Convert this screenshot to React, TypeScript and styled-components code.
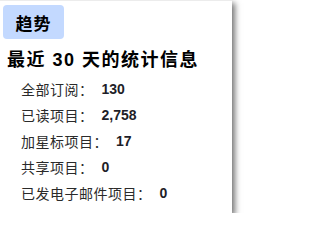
import React from 'react';
import styled, { createGlobalStyle } from 'styled-components';

const GlobalStyle = createGlobalStyle`
  html, body {
    margin: 0;
    padding: 0;
    background: #ffffff;
  }
  body {
    font-family: "Liberation Sans", "Noto Sans CJK SC", Arial, sans-serif;
  }
`;

interface StatItem {
  label: string;
  value: string;
}

const stats: StatItem[] = [
  { label: '全部订阅：', value: '130' },
  { label: '已读项目：', value: '2,758' },
  { label: '加星标项目：', value: '17' },
  { label: '共享项目：', value: '0' },
  { label: '已发电子邮件项目：', value: '0' }
];

const Card = styled.div`
  width: 232px;
  height: 213px;
  box-sizing: border-box;
  background: #ffffff;
  border-top: 1px solid #ececec;
  box-shadow: 3px 3px 6px rgba(0, 0, 0, 0.55);
  display: flex;
  flex-direction: column;
  align-items: flex-start;
`;

const Tab = styled.div`
  margin: 4px 0 0 3px;
  width: 61px;
  height: 34px;
  border-radius: 4px;
  background: #c3d9ff;
  display: flex;
  align-items: center;
  justify-content: center;
  font-size: 17px;
  font-weight: bold;
  color: #000;
  letter-spacing: 1px;
`;

const Heading = styled.h2`
  margin: 10px 0 0 7px;
  font-size: 18px;
  line-height: 22px;
  font-weight: bold;
  color: #000;
  letter-spacing: 1.5px;
  white-space: nowrap;
`;

const List = styled.ul`
  list-style: none;
  margin: 5px 0 0;
  padding: 0 0 0 21px;
  display: flex;
  flex-direction: column;
`;

const Row = styled.li`
  display: flex;
  align-items: center;
  height: 26px;
  font-size: 14px;
  color: #2a2a2a;
  white-space: nowrap;
`;

const Label = styled.span`
  letter-spacing: 0.5px;
`;

const Value = styled.b`
  margin-left: 8px;
  font-weight: bold;
  color: #1e1e28;
`;

export default function App() {
  return (
    <>
      <GlobalStyle />
      <Card>
        <Tab>趋势</Tab>
        <Heading>最近 30 天的统计信息</Heading>
        <List>
          {stats.map((s) => (
            <Row key={s.label}>
              <Label>{s.label}</Label>
              <Value>{s.value}</Value>
            </Row>
          ))}
        </List>
      </Card>
    </>
  );
}
